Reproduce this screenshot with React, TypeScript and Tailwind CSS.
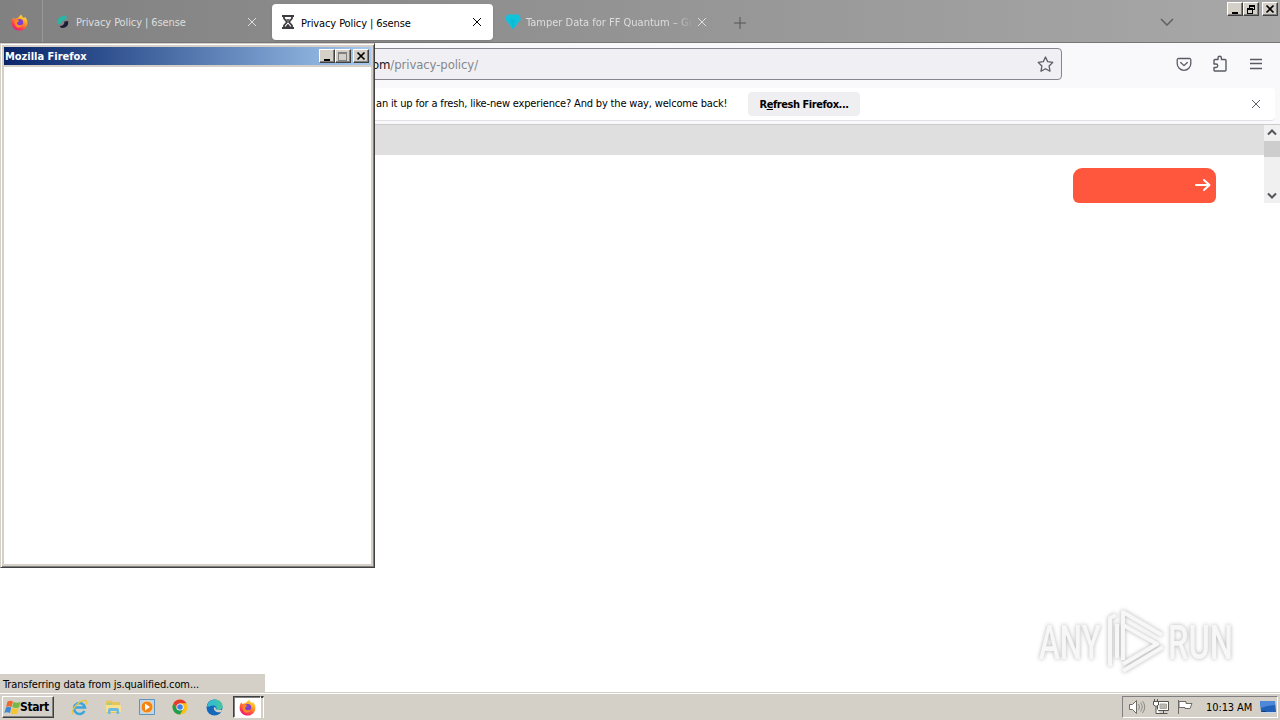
import React from 'react';

type IconProps = { className?: string };

const CloseGlyph: React.FC<IconProps> = ({ className }) => (
  <svg className={className} width="10" height="10" viewBox="0 0 10 10" fill="none" stroke="currentColor">
    <path d="M1 1l8 8M9 1L1 9" />
  </svg>
);

const FirefoxIcon: React.FC<{ size?: number }> = ({ size = 17 }) => (
  <svg width={size} height={size} viewBox="0 0 18 18">
    <defs>
      <linearGradient id="fox" x1="0.8" y1="0" x2="0.2" y2="1">
        <stop offset="0" stopColor="#fff04a" />
        <stop offset="0.4" stopColor="#ff9620" />
        <stop offset="0.75" stopColor="#ff3850" />
        <stop offset="1" stopColor="#e31587" />
      </linearGradient>
    </defs>
    <path d="M2.5 3.5l1.2 1.7C5 4.400 6 4.300 7 4.500 8 3 9 2 11 0.500c0 2 2 3 3 4l.7-1.500C17 5.500 17.700 8 17.300 10.500 16.500 14.800 13.200 17.500 9 17.500 4.500 17.500 1 14.300.700 10 .500 7.500 1.200 5 2.500 3.500z" fill="url(#fox)" />
    <circle cx="9.300" cy="9" r="3.600" fill="#8040d0" />
    <path d="M4 7c2-1.200 4-.8 5 .7-2 .2-2.500 1.300-2.500 2.300 1 2.500 4.500 2.500 6 .5-.5 3-3 4.500-5.500 4C4.500 13.700 3 10 4 7z" fill="#ff8a24" />
  </svg>
);

const SixsenseIcon: React.FC = () => (
  <svg width="14" height="14" viewBox="0 0 14 14">
    <path d="M10.500 0.500C5 .500 1 3.500 1 8c2 2 4 1 4.500-.5C6 5.500 8 5 10.500 4z" fill="#27b5a5" />
    <path d="M12 6c1 4-1.500 7-6 7-1.500-.5-2.500-1.500-2-2C7 11 8.500 9 8.500 6.500z" fill="#1b1b35" />
  </svg>
);

const HourglassIcon: React.FC = () => (
  <svg width="14" height="16" viewBox="0 0 14 16" fill="none" stroke="#3c3c40" strokeWidth="2">
    <path d="M1 2h12M1 14h12" />
    <path d="M3 2v2.500L6 8l-3 3.500V14M11 2v2.500L8 8l3 3.500V14" strokeWidth="1.800" />
    <path d="M5.500 5.500h3L7 7zM4.500 13L7 10l2.500 3z" fill="#3c3c40" strokeWidth="0.500" />
  </svg>
);

const DiamondIcon: React.FC = () => (
  <svg width="16" height="16" viewBox="0 0 16 16">
    <path d="M2.500 0.500h11L16 5l-8 10.500L0 5z" fill="#10c3dd" />
    <path d="M5 5.500L8 15.500l3-10z" fill="#0cbbd8" />
  </svg>
);

// Classic 3D caption button
const CaptionButton: React.FC<{ kind: 'min' | 'max' | 'restore' | 'close'; disabled?: boolean }> = ({ kind, disabled }) => (
  <div className="flex h-[14px] w-4 items-center justify-center border border-t-white border-l-white border-r-[#404040] border-b-[#404040] bg-[#d4d0c8] shadow-[inset_-1px_-1px_0_#808080]">
    <svg width="12" height="11" viewBox="0 0 12 11" fill="none" stroke={disabled ? '#808080' : '#000'} shapeRendering="crispEdges">
      {kind === 'min' && <path d="M3 9h6" strokeWidth="2" />}
      {kind === 'max' && <path d="M1.500 1.500h8v8h-8zM1 2.500h9" />}
      {kind === 'restore' && <path d="M4 1.500h6M4.500 1v3M9.500 1v5M7 5.500h3M4 2.500h6M2 4.500h6M2 5.500h6M2.500 4v5.500h5V4" />}
      {kind === 'close' && <path d="M2.500 1.500l7 7M9.500 1.500l-7 7" strokeWidth="1.700" shapeRendering="auto" />}
    </svg>
  </div>
);

const TabStrip: React.FC = () => (
  <header className="flex h-[43px] border-b border-[#777] bg-linear-to-r from-[#818181] to-[#a8a8a8]">
    <div className="flex w-[43px] shrink-0 items-center justify-center border-r border-[#999] pr-[3px] pt-0.5">
      <FirefoxIcon />
    </div>
    <div className="flex w-[225px] shrink-0 items-center pl-[13px] pt-0.5 text-[#dedede]">
      <SixsenseIcon />
      <span className="ml-[6px] w-[171px] pt-[2px] tracking-[-0.1px]">Privacy Policy | 6sense</span>
      <CloseGlyph />
    </div>
    <div className="mt-1 ml-1 flex h-9 w-[221px] shrink-0 items-center rounded bg-white pl-[9px] text-black shadow-sm">
      <HourglassIcon />
      <span className="ml-[6px] w-[171px] pt-[3px] tracking-[-0.1px]">Privacy Policy | 6sense</span>
      <CloseGlyph />
    </div>
    <div className="flex w-[228px] shrink-0 items-center pl-3 pt-0.5 text-[#dedede]">
      <DiamondIcon />
      <span className="ml-[5px] w-[167px] whitespace-nowrap pt-[2px] mask-r-from-88% mask-r-to-100%">
        Tamper Data for FF Quantum – Ge
      </span>
      <CloseGlyph className="ml-[4px]" />
    </div>
    <div className="flex items-center pl-[13px] pt-[3px]">
      <svg width="12" height="12" viewBox="0 0 12 12" stroke="#55555a">
        <path d="M6 0v12M0 6h12" />
      </svg>
    </div>
    <div className="ml-auto flex">
      <svg className="mt-[18px] mr-[53px]" width="14" height="8" viewBox="0 0 14 8" fill="none" stroke="#606064" strokeWidth="1.500">
        <path d="M1 1l6 6 6-6" />
      </svg>
      <div className="mt-0.5 mr-[2px] flex">
        <CaptionButton kind="min" />
        <CaptionButton kind="restore" />
        <div className="ml-[3px]">
          <CaptionButton kind="close" />
        </div>
      </div>
    </div>
  </header>
);

const NavBar: React.FC = () => (
  <div className="flex h-[45px] items-start bg-[#f9f9fb] pt-[5px] text-[#5b5b66]">
    <div className="flex h-8 w-[962px] ml-[100px] items-center justify-between rounded border border-[#85858f] bg-[#f0f0f4] pr-[7px] pl-[271px]">
      <span className="pt-[2px] text-[13px] tracking-[-0.1px] text-[#86868c]"><span className="text-[#15141a]">om</span>/privacy-policy/</span>
      <svg width="17" height="17" viewBox="0 0 17 17" fill="none" stroke="currentColor" strokeWidth="1.300" strokeLinejoin="round">
        <path d="M8.500 1l2.200 4.700 5.100.7-3.700 3.600.9 5.200-4.500-2.500L4 15.200l.9-5.200L1.200 6.400l5.100-.7z" />
      </svg>
    </div>
    <div className="ml-auto flex items-center pt-[7px] pr-[17px]">
      <svg width="16" height="16" viewBox="0 0 16 16" fill="none" stroke="currentColor" strokeWidth="1.300" strokeLinecap="round" strokeLinejoin="round">
        <path d="M2.500 2.500h11a1.300 1.300 0 011.300 1.300v3.700a6.800 6.800 0 01-13.600 0V3.800a1.300 1.300 0 011.300-1.300zM4.700 6.500L8 9.600l3.300-3.100" />
      </svg>
      <svg className="ml-5" width="16" height="17" viewBox="0 0 16 17" fill="none" stroke="currentColor" strokeWidth="1.400" strokeLinejoin="round">
        <path d="M2 7V5.500a1 1 0 011-1h3V3a1.700 1.700 0 013.400 0v1.500H13a1 1 0 011 1V15a1 1 0 01-1 1H3a1 1 0 01-1-1v-2.500h2a1.700 1.700 0 000-3.500H2z" />
      </svg>
      <svg className="ml-[21px]" width="14" height="12" viewBox="0 0 14 12" stroke="currentColor" strokeWidth="1.300">
        <path d="M1 1.500h12M1 5.500h12M1 10.500h12" />
      </svg>
    </div>
  </div>
);

const Notification: React.FC = () => (
  <div className="flex h-[37px] border-b border-[#cccccf] bg-[#f9f9fb] pr-[5px]">
    <div className="mb-[3px] flex flex-1 items-center rounded border-b border-[#e2e2e4] bg-white pl-[376px] text-black">
      <span className="w-[372px] whitespace-nowrap pb-px tracking-[-0.17px]">an it up for a fresh, like-new experience? And by the way, welcome back!</span>
      <button className="h-6 w-28 rounded bg-[#efeff1] pt-0.5 text-[11px] font-bold"><span className="tracking-[-0.45px]">R<span className="underline">e</span>fresh Firefox...</span></button>
      <CloseGlyph className="mr-[14px] ml-auto text-[#5b5b66]" />
    </div>
  </div>
);

const PageView: React.FC = () => (
  <div className="flex h-[78px]">
    <div className="flex-1 bg-white">
      <div className="h-[30px] bg-[#dfdfdf]" />
      <div className="mt-[13px] mr-12 ml-auto flex h-[35px] w-[143px] justify-end rounded-t-[9px] rounded-b-md bg-[#ff573d] pt-[10px] pr-[5px]">
        <svg width="16" height="14" viewBox="0 0 16 14" fill="none" stroke="#fff" strokeWidth="2" strokeLinecap="round" strokeLinejoin="round">
          <path d="M1 7h13M9 2l5.500 5L9 12" />
        </svg>
      </div>
    </div>
    <div className="flex w-4 flex-col items-center bg-[#f0f0f0]">
      <svg className="h-4" width="10" height="16" viewBox="0 0 10 16" fill="none" stroke="#55555a" strokeWidth="2">
        <path d="M1 9.500l4-4 4 4" />
      </svg>
      <div className="h-4 w-full bg-[#cdcdcd]" />
      <svg className="mt-auto" width="10" height="16" viewBox="0 0 10 16" fill="none" stroke="#55555a" strokeWidth="2">
        <path d="M1 6.500l4 4 4-4" />
      </svg>
    </div>
  </div>
);

const PopupWindow: React.FC = () => (
  <section className="absolute top-[43px] left-0 flex h-[525px] w-[375px] flex-col border border-t-[#d4d0c8] border-l-[#d4d0c8] border-r-[#404040] border-b-[#404040] bg-[#d4d0c8] p-[3px] pr-[2px] pb-[2px] shadow-[inset_1px_1px_0_#fff,inset_-1px_-1px_0_#808080]">
    <div className="flex h-[18px] w-[367px] items-center bg-linear-to-r from-[#0a246a] to-[#a6caf0] pr-0.5 pl-[1px] text-white">
      <span className="mr-auto pt-px font-bold tracking-[-0.02px]">Mozilla Firefox</span>
      <CaptionButton kind="min" />
      <CaptionButton kind="max" disabled />
      <div className="ml-0.5">
        <CaptionButton kind="close" />
      </div>
    </div>
    <div className="mt-[2px] mr-[1px] mb-[1px] flex-1 bg-white" />
  </section>
);

const Watermark: React.FC = () => (
  <div className="absolute top-[606px] left-[1037px] flex w-[198px] items-center font-['Roboto',sans-serif] text-[#f7f7f7] drop-shadow-[0_0_2px_#b4b4b4]">
    <svg className="overflow-visible" width="198" height="70" viewBox="0 0 198 70">
      <g fill="currentColor" fontSize="48" fontWeight="500">
        <text x="2" y="53" textLength="62" lengthAdjust="spacingAndGlyphs">ANY</text>
        <text x="131" y="53" textLength="65" lengthAdjust="spacingAndGlyphs">RUN</text>
      </g>
      <g fill="none" stroke="currentColor" strokeWidth="4" strokeLinejoin="round">
        <path d="M73 60V12l6-3M80 52V18M86 54V6l39 23M86 19l34 19-34 20M86 65l40-24" />
      </g>
    </svg>
  </div>
);

const IeIcon: React.FC = () => (
  <svg width="17" height="17" viewBox="0 0 17 17" fill="none">
    <path d="M13.500 12A5.500 5.500 0 1114 8.500H4" stroke="#38a5df" strokeWidth="2.500" />
    <path d="M2 15C-1 12 8 1 14 1.500c3 .5 1 4 1 4" stroke="#e8c547" strokeWidth="1.400" />
  </svg>
);

const FolderIcon: React.FC = () => (
  <svg width="17" height="16" viewBox="0 0 17 16">
    <path d="M1 3l1-1.500h5L8 3h7v11H1z" fill="#e8c45c" />
    <path d="M2 4h5v7H2z" fill="#a8cf80" />
    <path d="M1 6h15v7H1z" fill="#f8e18e" />
    <path d="M3 15v-4q0-2 2-2h7q2 0 2 2v4h-2.500v-3h-6v3z" fill="#6eb9e2" />
  </svg>
);

const MediaIcon: React.FC = () => (
  <svg width="16" height="16" viewBox="0 0 16 16">
    <path d="M.5.500h15v15H.500z" fill="#b9d8ef" stroke="#5e94bd" />
    <circle cx="8" cy="8" r="6" fill="#f48414" stroke="#fbd2a0" />
    <path d="M6 4.500l5 3.500-5 3.500z" fill="#fff" />
  </svg>
);

const ChromeIcon: React.FC = () => (
  <svg width="16" height="16" viewBox="0 0 16 16">
    <circle cx="8" cy="8" r="7.500" fill="#fbc116" />
    <path d="M1.500 4.200A7.500 7.500 0 0114.500 4.300H8L5 10z" fill="#e33b2e" />
    <path d="M1.500 4.200A7.500 7.500 0 008 15.500l3.300-5.600L5 10z" fill="#229c4d" />
    <circle cx="8" cy="8" r="3.600" fill="#fff" />
    <circle cx="8" cy="8" r="2.800" fill="#3f7fe8" />
  </svg>
);

const EdgeIcon: React.FC = () => (
  <svg width="17" height="17" viewBox="0 0 17 17">
    <circle cx="8.500" cy="8.500" r="8" fill="#1668bb" />
    <path d="M1 7C3 1 7 .500 9 .500c5 0 8 4 7.500 7.500-.5 3-4 4-6.500 3 1.500-2 0-4.500-3-4.500S1 9 1 7z" fill="#35bdc8" />
    <path d="M9 .5c5 0 8 4 7.500 7.500-.5 3-4 4-6.500 3C12 8 12 4 9 .500z" fill="#5ad06c" opacity="0.400" />
    <path d="M8 8c-1 4 3 6 7 5l2-2h-5c-2 0-3-1-2-2z" fill="#d4d0c8" />
  </svg>
);

const WindowsFlag: React.FC = () => (
  <svg width="17" height="15" viewBox="0 0 17 15">
    <path d="M3.500 1.500Q6 0 9 1.500L7.500 7Q5 5.500 2 7z" fill="#ee6a2c" />
    <path d="M9.500 2Q12.500 3.500 16.500 2L15 7.500Q11.500 8.500 8.200 7z" fill="#76b843" />
    <path d="M2 7.500Q4.500 6 7.300 7.500L6 13Q3 11.500 .3 13z" fill="#3e89d1" />
    <path d="M8 8Q11 9.500 14.700 8L13.300 13.500Q10 15 6.600 13.500z" fill="#f7c52f" />
  </svg>
);

const Taskbar: React.FC = () => (
  <footer className="flex h-7 border-t border-[#d4d0c8] bg-[#d4d0c8] text-black shadow-[inset_0_1px_0_#fff]">
    <button className="mt-[3px] ml-0.5 flex h-[22px] w-[52px] items-center border border-t-white border-l-white border-r-[#404040] border-b-[#404040] pl-px font-bold shadow-[inset_-1px_-1px_0_#808080]">
      <WindowsFlag />
      <span className="-ml-px text-[12px] tracking-[-0.4px]">Start</span>
    </button>
    <div className="ml-[17px] flex items-center gap-[17px] pt-px">
      <IeIcon />
      <FolderIcon />
      <MediaIcon />
      <div className="flex gap-[18px]">
        <ChromeIcon />
        <EdgeIcon />
      </div>
    </div>
    <div className="mt-[3px] ml-[10px] flex h-[22px] w-[28px] items-center justify-center border border-t-[#404040] border-l-[#404040] border-r-white border-b-white bg-white shadow-[inset_1px_1px_0_#808080]">
      <FirefoxIcon />
    </div>
    <div className="mt-[3px] h-[22px] w-[3px] border-t-2 border-r border-t-[#404040] border-r-white" />
    <div className="mt-[3px] mr-0.5 ml-auto flex h-[22px] w-[156px] items-center border border-t-[#808080] border-l-[#808080] border-r-white border-b-white pl-1.5">
      <svg width="17" height="16" viewBox="0 0 17 16" fill="none" stroke="#6d6b66">
        <path d="M.5 5.500h3l4-4v13l-4-4h-3z" fill="#fff" />
        <path d="M9.500 5q2 3 0 6M11.500 3.500q3.500 4.500 0 9M13.500 2q4.500 6 0 12" stroke="#8f8c86" />
      </svg>
      <svg className="ml-[7px]" width="17" height="16" viewBox="0 0 17 16" fill="none" stroke="#55534f">
        <path d="M4.500 2.500h11v9h-11zM6.500 14.500h8M10.500 12v2" fill="#fff" />
        <path d="M7 5h6.500v4.500H7z" fill="#bbb8b2" stroke="#a8a59e" />
        <path d="M.5 2.500h5V6L3 7.500.5 6zM1.500 0v2M4.500 0v2M3 8v6.500h4" fill="#fff" />
      </svg>
      <svg className="ml-[7px]" width="16" height="16" viewBox="0 0 16 16" fill="none" stroke="#6d6b66">
        <path d="M1.500 1v14" />
        <path d="M2 2.500h7v2h6l-2 5H8v-1H2z" fill="#fff" />
      </svg>
      <span className="ml-[13px] w-[55px] whitespace-nowrap pt-px tracking-[-0.1px]">10:13 AM</span>
      <svg className="-ml-px shrink-0" width="16" height="14" viewBox="0 0 16 14">
        <path d="M0 1h15l1 11H1z" fill="#2360b7" />
        <path d="M0 1h15v4Q8 5 1 8z" fill="#4e88da" />
        <path d="M1 12h15v1H1z" fill="#c4d8ee" />
        <path d="M2 11h4v1H2z" fill="#163c72" />
      </svg>
    </div>
  </footer>
);

const App: React.FC = () => {
  return (
    <div className="relative flex h-[720px] w-[1280px] flex-col overflow-hidden bg-white font-['DejaVu_Sans_Condensed','DejaVu_Sans',sans-serif] text-[11px] leading-[14px]">
      <TabStrip />
      <NavBar />
      <Notification />
      <PageView />

      {/* Link / loading status */}
      <div className="mt-auto flex h-[18px] w-[265px] items-center bg-[#d4d0c8] pl-[3px] pt-[3px] text-black">
        <span className="whitespace-nowrap tracking-[-0.12px]">Transferring data from js.qualified.com...</span>
      </div>
      <Taskbar />

      <PopupWindow />
      <Watermark />
    </div>
  );
};

export default App;
